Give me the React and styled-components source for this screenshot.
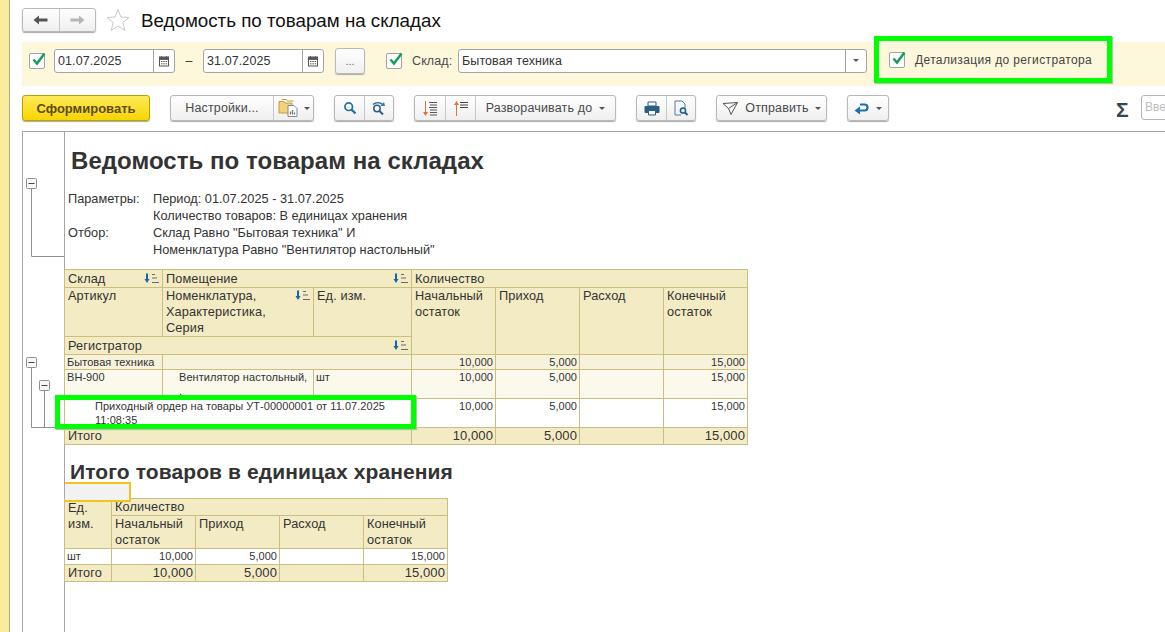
import React from "react";
import styled, { createGlobalStyle } from "styled-components";

const GlobalStyle = createGlobalStyle`
  html, body {
    margin: 0;
    padding: 0;
    height: 100%;
    background: #fff;
    overflow: hidden;
    font-family: "Liberation Sans", Arial, sans-serif;
  }
  #root { height: 100%; }
`;

const Page = styled.div`
  display: flex;
  width: 1165px;
  height: 632px;
  overflow: hidden;
`;

const SideStrip = styled.div`
  flex: none;
  width: 9px;
  background: #fbeb9c;
  border-right: 1px solid #b0a98a;
`;

const Main = styled.div`
  flex: 1;
  min-width: 0;
  padding: 8px 0 0 12px;
  display: flex;
  flex-direction: column;
`;

const TitleRow = styled.div`
  display: flex;
  align-items: center;
  height: 24px;
`;

const NavGroup = styled.div`
  display: flex;
  width: 74px;
  height: 24px;
  box-sizing: border-box;
  border: 1px solid #b9b9b9;
  border-radius: 3px;
  box-shadow: 0 1px 1px #aaa;
  background: linear-gradient(#fff, #efefef);
`;

const NavButton = styled.div`
  flex: 1;
  display: flex;
  align-items: center;
  justify-content: center;
  & + & { border-left: 1px solid #c8c8c8; }
`;

const FormTitle = styled.h1`
  margin: 2px 0 0 11px;
  font-size: 18.75px;
  font-weight: normal;
  color: #111;
  white-space: nowrap;
`;

const StarIcon = styled.svg`
  margin-left: 10px;
  flex: none;
`;

const FilterBar = styled.div`
  display: flex;
  align-items: center;
  height: 44px;
  box-sizing: border-box;
  margin-top: 10px;
  padding: 0 0 7px 7px;
  background: #fdf8dc;
  font-size: 12.5px;
  color: #4b4b4b;
`;

const CheckBox = styled.span`
  flex: none;
  position: relative;
  width: 14px;
  height: 14px;
  border: 1px solid #a3a3a3;
  border-radius: 2px;
  background: #fff;
  margin-left: ${(p) => p.$left || 0}px;
  margin-right: ${(p) => p.$gap || 0}px;
  svg { position: absolute; left: 1px; top: -3px; }
`;

const DateField = styled.div`
  flex: none;
  display: flex;
  width: 121px;
  height: 24px;
  box-sizing: border-box;
  border: 1px solid #a5a5a5;
  border-radius: 3px;
  background: #fff;
  align-items: center;
`;

const FieldText = styled.span`
  flex: 1;
  padding-left: 3px;
  font-size: 12.5px;
  letter-spacing: 0.1px;
  color: #333;
  white-space: nowrap;
`;

const FieldButton = styled.span`
  flex: none;
  width: 20px;
  height: 100%;
  border-left: 1px solid #a5a5a5;
  display: flex;
  align-items: center;
  justify-content: center;
`;

const Dash = styled.span`
  flex: none;
  width: 28px;
  text-align: center;
  color: #333;
`;

const DotsButton = styled.div`
  flex: none;
  width: 30px;
  height: 26px;
  margin-left: 11px;
  box-sizing: border-box;
  border: 1px solid #b9b9b9;
  border-radius: 3px;
  background: linear-gradient(#fff, #f0f0f0);
  box-shadow: 0 1px 1px #aaa;
  color: #666;
  font-size: 11px;
  display: flex;
  align-items: center;
  justify-content: center;
`;

const FilterLabel = styled.span`
  flex: none;
  width: 46px;
  margin-left: ${(p) => p.$left || 0}px;
  letter-spacing: 0.1px;
`;

const SelectField = styled(DateField)`
  width: 409px;
`;

const HighlightedFilter = styled.div`
  flex: none;
  display: flex;
  align-items: center;
  align-self: flex-start;
  box-sizing: border-box;
  width: 238px;
  height: 47px;
  margin: -6px 0 0 7px;
  padding-left: 10px;
  border: 5px solid #00ff00;
  box-shadow: 1px 1px 1px #bbb;
  font-size: 12px;
  letter-spacing: 0.37px;
  color: #444;
  white-space: nowrap;
`;

const Toolbar = styled.div`
  display: flex;
  align-items: flex-start;
  gap: 20px;
  margin-top: 9px;
  height: 36px;
`;

const ButtonGroup = styled.div`
  flex: none;
  display: flex;
  height: 26px;
  box-sizing: border-box;
  border: 1px solid #b9b9b9;
  border-radius: 3px;
  background: linear-gradient(#fff, #efefef);
  box-shadow: 0 1px 1px #aaa;
  color: #4a4a4a;
  font-size: 12.5px;
`;

const ToolButton = styled.div`
  width: ${(p) => p.$w}px;
  box-sizing: border-box;
  display: flex;
  align-items: center;
  justify-content: center;
  gap: ${(p) => p.$gap || 0}px;
  white-space: nowrap;
  letter-spacing: 0.15px;
  & + & { border-left: 1px solid #c8c8c8; }
`;

const PrimaryButton = styled.div`
  flex: none;
  width: 128px;
  height: 26px;
  box-sizing: border-box;
  border: 1px solid #b8a200;
  border-radius: 3px;
  background: linear-gradient(#fdea5a, #f8d500);
  box-shadow: 0 1px 1px #aaa;
  color: #5b4a12;
  font-size: 13px;
  font-weight: bold;
  display: flex;
  align-items: center;
  justify-content: center;
`;

const Caret = styled.span`
  flex: none;
  width: 0;
  height: 0;
  border-left: 3px solid transparent;
  border-right: 3px solid transparent;
  border-top: 3px solid #555;
`;

const SumIcon = styled.span`
  flex: none;
  margin: 0 0 0 207px;
  width: 12px;
  height: 26px;
  font-size: 21px;
  font-weight: bold;
  line-height: 30px;
  text-align: center;
  color: #36464f;
`;

const SearchInput = styled.div`
  flex: none;
  width: 120px;
  height: 25px;
  margin-left: -7px;
  box-sizing: border-box;
  border: 1px solid #b5b5b5;
  border-radius: 3px;
  padding: 4px 3px;
  font-size: 12px;
  color: #bdbdbd;
  background: #fff;
`;

const ReportFrame = styled.div`
  position: relative;
  flex: 1;
  display: flex;
  min-height: 0;
  border-left: 1px solid #a6a6a6;
  border-top: 1px solid #a6a6a6;
`;

const Gutter = styled.div`
  flex: none;
  width: 41px;
  border-right: 1px solid #a6a6a6;
`;

const Sheet = styled.div`
  flex: 1;
  min-width: 0;
  color: #333;
`;

const ReportTitle = styled.h2`
  margin: ${(p) => p.$top}px 0 ${(p) => p.$bottom}px ${(p) => p.$left}px;
  font-size: ${(p) => p.$size}px;
  letter-spacing: ${(p) => p.$ls}px;
  line-height: 26px;
  font-weight: bold;
  color: #333;
  white-space: nowrap;
`;

const Params = styled.div`
  display: grid;
  grid-template-columns: 85px 1fr;
  grid-auto-rows: 17px;
  padding-left: 3px;
  margin-bottom: 11px;
  font-size: 12.75px;
  line-height: 17px;
`;

const Table = styled.table`
  border-collapse: collapse;
  table-layout: fixed;
  width: ${(p) => p.$w}px;
  margin-left: -1px;
`;

const Col = styled.col`
  width: ${(p) => p.$w}px;
`;

const Row = styled.tr`
  height: ${(p) => p.$h}px;
  background: ${(p) => p.$bg || "#fff"};
`;

const Cell = styled.td`
  box-sizing: border-box;
  border: 1px solid #cdbe80;
  padding: ${(p) => p.$pt || 0}px 2px 0 ${(p) => p.$pl || 3}px;
  vertical-align: top;
  overflow: hidden;
  line-height: 16px;
  font-size: 12.75px;
  letter-spacing: 0.1px;
  text-align: ${(p) => (p.$num ? "right" : "left")};
  background: ${(p) => (p.$head ? "#f3ebc4" : "transparent")};
`;

// rows of data are set smaller and tighter than the header cells
const DataCell = styled(Cell)`
  font-size: 11px;
  line-height: 14px;
  letter-spacing: 0.05px;
`;

const TotalCell = styled(Cell)`
  font-size: 13px;
  letter-spacing: 0.1px;
  line-height: 15px;
`;

const CellHead = styled.div`
  display: flex;
  justify-content: space-between;
  align-items: flex-start;
`;

const ClippedText = styled.div`
  height: ${(p) => p.$h}px;
  overflow: hidden;
`;

const SortMark = styled.svg`
  flex: none;
  margin-top: 2px;
`;

const RowHighlight = styled.div`
  position: absolute;
  left: 32px;
  top: 263px;
  width: 361px;
  height: 34px;
  box-sizing: border-box;
  border: 5px solid #00ff00;
  box-shadow: 1px 1px 1px #bbb;
`;

const SelectedCell = styled.div`
  position: absolute;
  left: 42px;
  top: 350px;
  width: 66px;
  height: 20px;
  box-sizing: border-box;
  border: 2px solid #f6c21c;
  border-left: none;
  background: #f2f2f2;
`;

const Check = () => (
  <svg width="16" height="16" viewBox="0 0 16 16">
    <path d="M2.5 8.5 L6 12.5 L13.5 2.5" fill="none" stroke="#0f9d58" strokeWidth="2.4" />
  </svg>
);

const Calendar = () => (
  <svg width="12" height="12" viewBox="0 0 12 12">
    <rect x="1.5" y="2" width="9" height="9" fill="none" stroke="#555" />
    <path d="M1.5 2.5h9v2h-9z M3.5 1v2 M8.5 1v2" fill="#555" stroke="#555" strokeWidth="0.8" />
    <path d="M3 6.5h1.5M5.3 6.5h1.5M7.6 6.5h1.5M3 8.8h1.5M5.3 8.8h1.5M7.6 8.8h1.5" stroke="#555" />
  </svg>
);

const Arrow = ({ color, flip }) => (
  <svg width="15" height="12" viewBox="0 0 15 12" style={flip ? { transform: "scaleX(-1)" } : undefined}>
    <path d="M0.5 6 L6 1.5 V4.5 H14.5 V7.5 H6 V10.5 Z" fill={color} />
  </svg>
);

const Magnifier = () => (
  <svg width="14" height="14" viewBox="0 0 14 14">
    <circle cx="5.7" cy="5.7" r="3.8" fill="none" stroke="#1f6fa8" strokeWidth="1.7" />
    <path d="M8.6 8.6 L12.5 12.5" stroke="#1f6fa8" strokeWidth="2.2" />
  </svg>
);

const RepeatSearch = () => (
  <svg width="16" height="15" viewBox="0 0 16 15">
    <circle cx="6" cy="7.5" r="3.2" fill="none" stroke="#2c5f85" strokeWidth="1.5" />
    <path d="M8.5 10 L12 13.5" stroke="#2c5f85" strokeWidth="2" />
    <path d="M2 3.5 C5 1 9 1 11.5 3.5" fill="none" stroke="#2c5f85" strokeWidth="1.3" />
    <path d="M9.5 5 L14 5 L13 1z" fill="#1f7fc0" />
  </svg>
);

const Folders = () => (
  <svg width="22" height="20" viewBox="0 0 22 20">
    <path d="M1 3.5h5l1 1.5h7v10H1z" fill="#f3d27c" stroke="#c49a3c" />
    <path d="M3.5 1.5h5l1 1.5h6" fill="none" stroke="#c49a3c" />
    <path d="M10 7.5h6l3 3v8h-9z" fill="#fff" stroke="#7d8b95" />
    <path d="M12.5 16.5v-3" stroke="#d8483c" strokeWidth="1.3" />
    <path d="M14.5 16.5v-4.5" stroke="#4aa34a" strokeWidth="1.3" />
    <path d="M16.5 16.5v-2" stroke="#3b7fc4" strokeWidth="1.3" />
  </svg>
);

const ExpandLevels = () => (
  <svg width="16" height="17" viewBox="0 0 16 17">
    <path d="M3.5 1v13" stroke="#e4703a" />
    <path d="M1 12 L3.5 16 L6 12z" fill="#e4703a" />
    <path d="M7 2.5h8M8 5h7M7 7.5h8M8 10h7M8 12.5h7M8 15h7" stroke="#555" />
  </svg>
);

const CollapseLevels = () => (
  <svg width="16" height="17" viewBox="0 0 16 17">
    <path d="M3.5 3v13" stroke="#e4703a" />
    <path d="M1 5 L3.5 1 L6 5z" fill="#e4703a" />
    <path d="M7 2.5h8M7 5h8M7 7.5h8" stroke="#444" />
  </svg>
);

const Printer = () => (
  <svg width="16" height="15" viewBox="0 0 16 15">
    <path d="M4 1h8v4H4z" fill="#fff" stroke="#2c5f85" />
    <path d="M1 5.5h14v6h-3v-2H4v2H1z" fill="#2c5f85" stroke="#2c5f85" />
    <path d="M4.5 9.5h7v4.5h-7z" fill="#fff" stroke="#2c5f85" />
  </svg>
);

const Preview = () => (
  <svg width="16" height="16" viewBox="0 0 16 16">
    <path d="M2 1h7l3 3v4 M2 1v14h6" fill="none" stroke="#4d7a99" />
    <circle cx="10" cy="10.5" r="2.6" fill="#d9e8f2" stroke="#1f5f8a" strokeWidth="1.5" />
    <path d="M12 12.5 L14.5 15" stroke="#1f5f8a" strokeWidth="2" />
  </svg>
);

const SendIcon = () => (
  <svg width="17" height="15" viewBox="0 0 17 15">
    <path d="M1 2.5 L15.5 1.5 L9 13.5 L6.5 7.5z M6.5 7.5 L15.5 1.5" fill="none" stroke="#555" />
  </svg>
);

const ReturnIcon = () => (
  <svg width="15" height="13" viewBox="0 0 15 13">
    <path d="M6 2.5 H10.5 A3 3 0 0 1 10.5 8.5 H5" fill="none" stroke="#1f6fa8" strokeWidth="2.2" />
    <path d="M6 4.5 L0.5 8.5 L6 12.5z" fill="#1f6fa8" />
  </svg>
);

const Sort = () => (
  <SortMark width="16" height="11" viewBox="0 0 16 11">
    <path d="M3 0.5v6" stroke="#1565a8" strokeWidth="2" />
    <path d="M0.5 6 H5.5 L3 10z" fill="#1565a8" />
    <path d="M8 1.5h3M8 5h5M8 9.5h7" stroke="#6b6b6b" />
  </SortMark>
);

const Outline = () => (
  <svg width="41" height="500" viewBox="0 0 41 500">
    <g fill="none" stroke="#8f8f8f">
      <path d="M8.5 56v68.5H41" />
      <path d="M8.5 235v60.5H41" />
      <path d="M21.5 258v37.5" />
    </g>
    {[[3.5, 46.5], [3.5, 225.5], [16.5, 248.5]].map(([x, y]) => (
      <g key={y}>
        <rect x={x} y={y} width="10" height="10" rx="1" fill="#f7f7f7" stroke="#8f8f8f" />
        <path d={`M${x + 2} ${y + 5}h6`} stroke="#444" />
      </g>
    ))}
  </svg>
);

const NUMS = ["10,000", "5,000", "", "15,000"];

const App = () => (
  <Page>
    <GlobalStyle />
    <SideStrip />
    <Main>
      <TitleRow>
        <NavGroup>
          <NavButton><Arrow color="#555" /></NavButton>
          <NavButton><Arrow color="#b5b5b5" flip /></NavButton>
        </NavGroup>
        <StarIcon width="24" height="24" viewBox="0 0 24 24">
          <path d="M12 1.5 L15 9 L23 9.5 L16.8 14.6 L18.9 22.5 L12 18 L5.1 22.5 L7.2 14.6 L1 9.5 L9 9 Z" fill="#fff" stroke="#c9c9c9" />
        </StarIcon>
        <FormTitle>Ведомость по товарам на складах</FormTitle>
      </TitleRow>

      <FilterBar>
        <CheckBox $gap={9}><Check /></CheckBox>
        <DateField>
          <FieldText>01.07.2025</FieldText>
          <FieldButton><Calendar /></FieldButton>
        </DateField>
        <Dash>–</Dash>
        <DateField>
          <FieldText>31.07.2025</FieldText>
          <FieldButton><Calendar /></FieldButton>
        </DateField>
        <DotsButton>...</DotsButton>
        <CheckBox $left={21}><Check /></CheckBox>
        <FilterLabel $left={10}>Склад:</FilterLabel>
        <SelectField>
          <FieldText>Бытовая техника</FieldText>
          <FieldButton><Caret /></FieldButton>
        </SelectField>
        <HighlightedFilter>
          <CheckBox $gap={10}><Check /></CheckBox>
          Детализация до регистратора
        </HighlightedFilter>
      </FilterBar>

      <Toolbar>
        <PrimaryButton>Сформировать</PrimaryButton>
        <ButtonGroup>
          <ToolButton $w={102}>Настройки...</ToolButton>
          <ToolButton $w={40} $gap={4}><Folders /><Caret /></ToolButton>
        </ButtonGroup>
        <ButtonGroup>
          <ToolButton $w={29}><Magnifier /></ToolButton>
          <ToolButton $w={29}><RepeatSearch /></ToolButton>
        </ButtonGroup>
        <ButtonGroup>
          <ToolButton $w={30}><ExpandLevels /></ToolButton>
          <ToolButton $w={30}><CollapseLevels /></ToolButton>
          <ToolButton $w={140} $gap={7}>Разворачивать до<Caret /></ToolButton>
        </ButtonGroup>
        <ButtonGroup>
          <ToolButton $w={29}><Printer /></ToolButton>
          <ToolButton $w={29}><Preview /></ToolButton>
        </ButtonGroup>
        <ButtonGroup>
          <ToolButton $w={109} $gap={6}><SendIcon />Отправить<Caret /></ToolButton>
        </ButtonGroup>
        <ButtonGroup>
          <ToolButton $w={40} $gap={7}><ReturnIcon /><Caret /></ToolButton>
        </ButtonGroup>
        <SumIcon>Σ</SumIcon>
        <SearchInput>Вве</SearchInput>
      </Toolbar>

      <ReportFrame>
        <Gutter><Outline /></Gutter>
        <Sheet>
          <ReportTitle $top={16} $bottom={16} $left={6} $size={24} $ls={0.05}>Ведомость по товарам на складах</ReportTitle>
          <Params>
            <span>Параметры:</span><span>Период: 01.07.2025 - 31.07.2025</span>
            <span /><span>Количество товаров: В единицах хранения</span>
            <span>Отбор:</span><span>Склад Равно "Бытовая техника" И</span>
            <span /><span>Номенклатура Равно "Вентилятор настольный"</span>
          </Params>

          <Table $w={683}>
            <colgroup>
              <Col $w={98} /><Col $w={151} /><Col $w={98} />
              <Col $w={84} /><Col $w={84} /><Col $w={84} /><Col $w={84} />
            </colgroup>
            <tbody>
              <Row $h={18}>
                <Cell $head $pt={1}><CellHead>Склад<Sort /></CellHead></Cell>
                <Cell $head $pt={1} colSpan={2}><CellHead>Помещение<Sort /></CellHead></Cell>
                <Cell $head $pt={1} colSpan={4}>Количество</Cell>
              </Row>
              <Row $h={49}>
                <Cell $head>Артикул</Cell>
                <Cell $head><CellHead><span>Номенклатура,<br />Характеристика,<br />Серия</span><Sort /></CellHead></Cell>
                <Cell $head>Ед. изм.</Cell>
                <Cell $head rowSpan={2}>Начальный<br />остаток</Cell>
                <Cell $head rowSpan={2}>Приход</Cell>
                <Cell $head rowSpan={2}>Расход</Cell>
                <Cell $head rowSpan={2}>Конечный<br />остаток</Cell>
              </Row>
              <Row $h={18}>
                <Cell $head $pt={1} colSpan={3}><CellHead>Регистратор<Sort /></CellHead></Cell>
              </Row>
              <Row $h={15} $bg="#f7f2dc">
                <DataCell $pl={2}>Бытовая техника</DataCell>
                <DataCell colSpan={2} />
                {NUMS.map((n, i) => <DataCell key={i} $num>{n}</DataCell>)}
              </Row>
              <Row $h={29} $bg="#fbf8ec">
                <DataCell $pl={2}>ВН-900</DataCell>
                <DataCell $pl={16}><ClippedText $h={28}>Вентилятор настольный,<br />,</ClippedText></DataCell>
                <DataCell $pl={2}>шт</DataCell>
                {NUMS.map((n, i) => <DataCell key={i} $num>{n}</DataCell>)}
              </Row>
              <Row $h={29}>
                <DataCell colSpan={3} $pl={30}><ClippedText $h={28}>Приходный ордер на товары УТ-00000001 от 11.07.2025<br />11:08:35</ClippedText></DataCell>
                {NUMS.map((n, i) => <DataCell key={i} $num>{n}</DataCell>)}
              </Row>
              <Row $h={16}>
                <Cell $head colSpan={3}>Итого</Cell>
                {NUMS.map((n, i) => <TotalCell key={i} $head $num>{n}</TotalCell>)}
              </Row>
            </tbody>
          </Table>

          <ReportTitle $top={14} $bottom={13} $left={5} $size={21} $ls={0.1}>Итого товаров в единицах хранения</ReportTitle>

          <Table $w={383}>
            <colgroup>
              <Col $w={47} /><Col $w={84} /><Col $w={84} /><Col $w={84} /><Col $w={84} />
            </colgroup>
            <tbody>
              <Row $h={17}>
                <Cell $head rowSpan={2} $pt={1}>Ед.<br />изм.</Cell>
                <Cell $head colSpan={4}>Количество</Cell>
              </Row>
              <Row $h={33}>
                <Cell $head>Начальный<br />остаток</Cell>
                <Cell $head>Приход</Cell>
                <Cell $head>Расход</Cell>
                <Cell $head>Конечный<br />остаток</Cell>
              </Row>
              <Row $h={16}>
                <DataCell $pl={2}>шт</DataCell>
                {NUMS.map((n, i) => <DataCell key={i} $num>{n}</DataCell>)}
              </Row>
              <Row $h={17}>
                <Cell $head>Итого</Cell>
                {NUMS.map((n, i) => <TotalCell key={i} $head $num>{n}</TotalCell>)}
              </Row>
            </tbody>
          </Table>
        </Sheet>
        <RowHighlight />
        <SelectedCell />
      </ReportFrame>
    </Main>
  </Page>
);

export default App;
